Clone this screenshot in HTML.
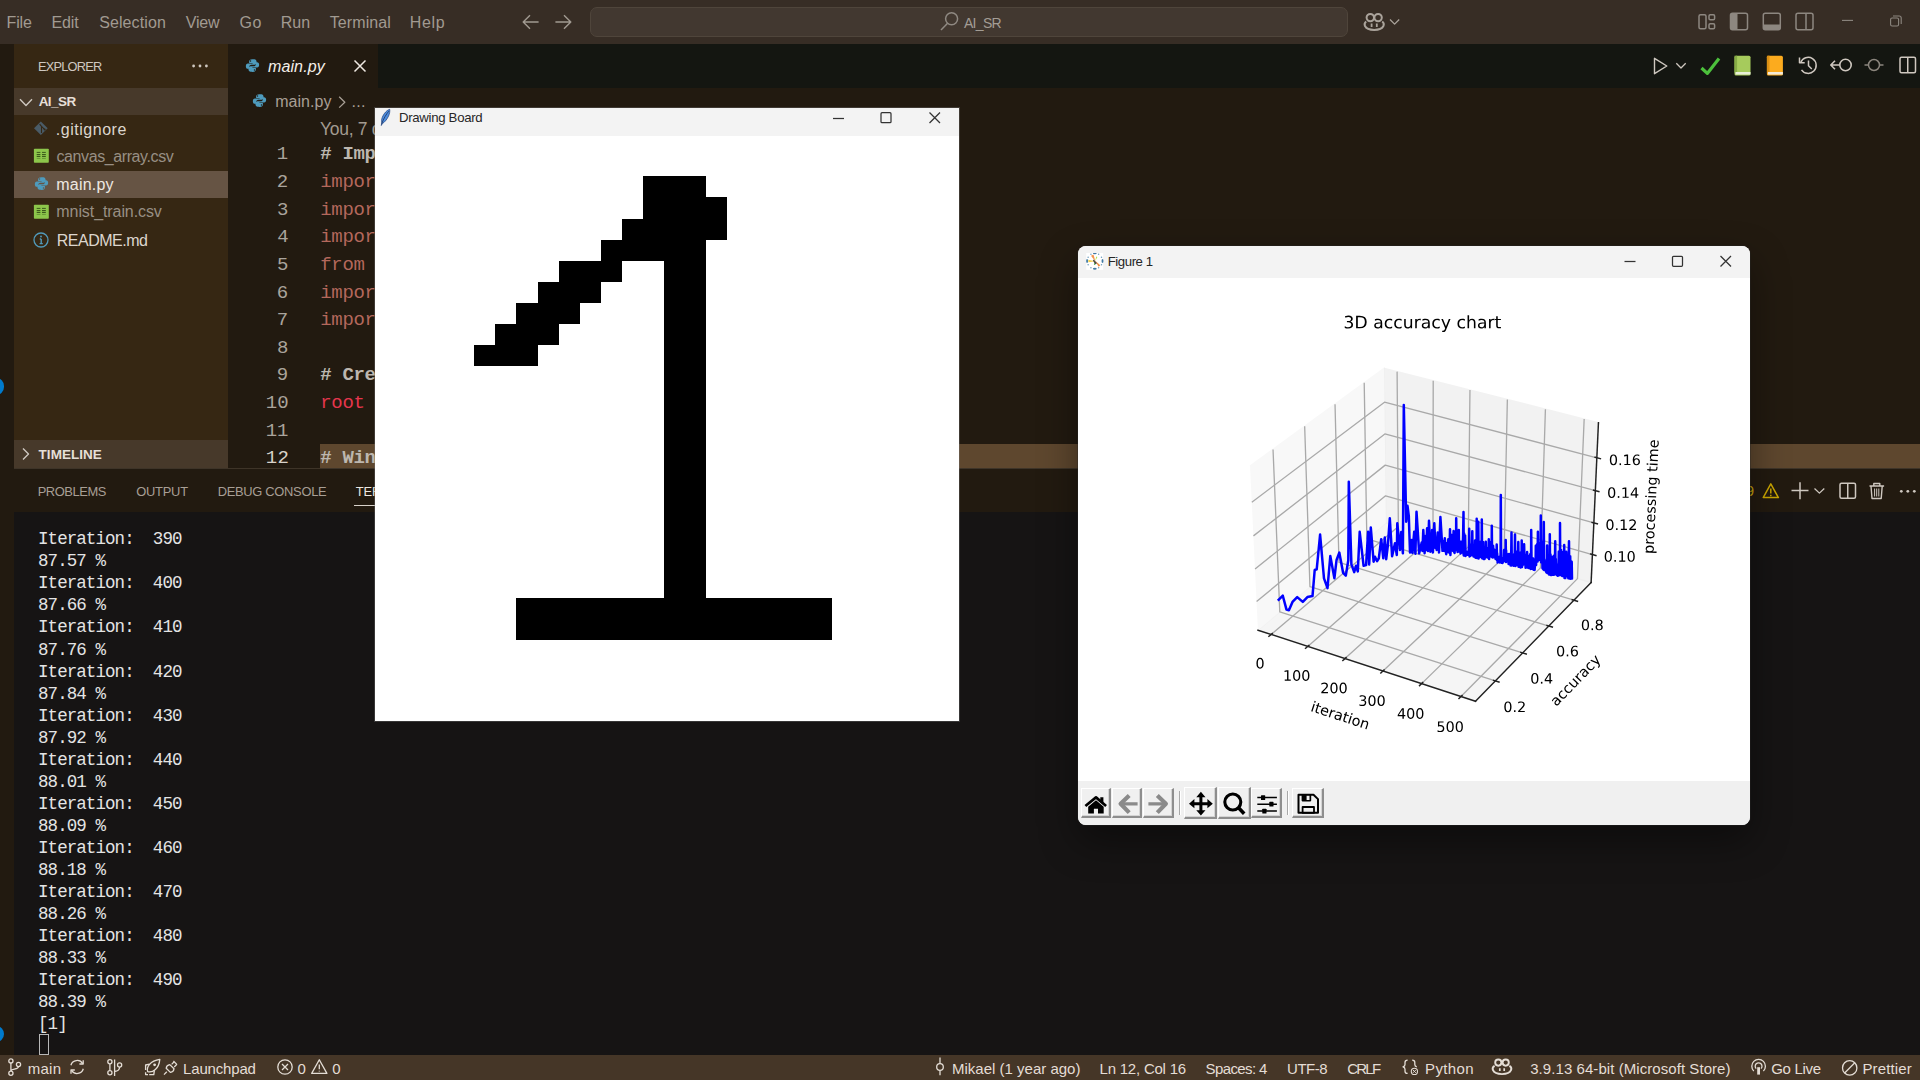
<!DOCTYPE html>
<html><head><meta charset="utf-8"><title>AI_SR - Visual Studio Code</title>
<style>
*{box-sizing:border-box;margin:0;padding:0}
html,body{width:1920px;height:1080px;overflow:hidden;background:#221a10}
body{font-family:"Liberation Sans",sans-serif;position:relative;color:#ddd5cc}
.abs{position:absolute}
.t{position:absolute;white-space:pre;line-height:1}
#titlebar{left:0;top:0;width:1920px;height:44px;background:#372d25}
.menu{font-size:16px;color:#c9c2ba;top:14px}
#search{left:590px;top:7px;width:758px;height:30px;background:#423830;border:1px solid #4f453b;border-radius:7px}
#strip{left:0;top:44px;width:14px;height:1011px;background:#221a10}
#sidebar{left:14px;top:44px;width:214px;height:424px;background:#362713}
#editor{left:228px;top:44px;width:1692px;height:424px;background:#221a10}
#tabbar{left:378px;top:44px;width:1542px;height:44px;background:#141611}
#curline{left:320px;top:443.500px;width:1600px;height:24.500px;background:#5e472e}
#panelhead{left:14px;top:468px;width:1906px;height:44px;background:#221a10;border-top:1px solid #3e3428}
#terminal{left:14px;top:512px;width:1906px;height:543px;background:#161414}
#status{left:0;top:1052px;width:1920px;height:28px;background:#453627}
.sb{font-size:16.25px;left:57px}
.mono{font-family:"Liberation Mono",monospace}
.ln{font-family:"Liberation Mono",monospace;font-size:18.3px;color:#aaa49c;width:60px;left:228px;text-align:right}
.code{font-family:"Liberation Mono",monospace;font-size:18.33px;left:320px}
.term{font-family:"Liberation Mono",monospace;font-size:17px;letter-spacing:-0.65px;color:#e6e6e6;left:39px}
.st{font-size:15px;color:#e4ddd5;top:1061px}
</style></head><body>
<svg width="0" height="0" style="position:absolute"><defs><symbol id="py" viewBox="0 0 16 16"><path fill="#4e9bbd" d="M7.900 1.200c-2.700 0-3.500 1.100-3.500 2.500v1.600h3.700v.6H3.100C1.700 5.900.9 7.100.9 8.700s.8 2.800 2.200 2.800h1.200V9.600c0-1.400 1.200-2.500 2.600-2.500h3.400c1.200 0 2-.9 2-2.100V3.700c0-1.300-1-2.200-2.200-2.400-.7-.1-1.500-.1-2.200-.1zM5.900 2.400a.75.75 0 1 1 0 1.500.75.75 0 0 1 0-1.500z"/><path fill="#4e9bbd" d="M8.100 14.800c2.700 0 3.500-1.100 3.500-2.500v-1.600H7.900v-.6h5c1.400 0 2.200-1.200 2.200-2.800s-.8-2.800-2.200-2.800h-1.200v1.900c0 1.400-1.200 2.500-2.600 2.500H5.700c-1.200 0-2 .9-2 2.100v1.300c0 1.300 1 2.200 2.200 2.400.7.100 1.500.1 2.200.1zm2-1.200a.75.75 0 1 1 0-1.500.75.75 0 0 1 0 1.500z"/></symbol></defs></svg>
<div id="titlebar" class="abs"></div>
<div class="t" style="left:6.59px;top:15.00px;font-size:16px;color:#a19a91;letter-spacing:-0.187px;">File</div>
<div class="t" style="left:51.39px;top:15.00px;font-size:16px;color:#a19a91;letter-spacing:-0.081px;">Edit</div>
<div class="t" style="left:99.18px;top:15.00px;font-size:16px;color:#a19a91;letter-spacing:0.104px;">Selection</div>
<div class="t" style="left:185.64px;top:15.00px;font-size:16px;color:#a19a91;letter-spacing:-0.123px;">View</div>
<div class="t" style="left:239.50px;top:15.00px;font-size:16px;color:#a19a91;letter-spacing:0.528px;">Go</div>
<div class="t" style="left:280.69px;top:15.00px;font-size:16px;color:#a19a91;">Run</div>
<div class="t" style="left:329.75px;top:15.00px;font-size:16px;color:#a19a91;letter-spacing:0.094px;">Terminal</div>
<div class="t" style="left:409.79px;top:15.00px;font-size:16px;color:#a19a91;letter-spacing:0.624px;">Help</div>
<svg class="abs" style="left:520px;top:12px" width="56" height="20" viewBox="0 0 56 20" fill="none" stroke="#a19a91" stroke-width="1.400"><path d="M18.600 10H3.400M10 3.200 3.200 10l6.800 6.800"/><path d="M35.400 10h15.200M44 3.200l6.800 6.800-6.800 6.800"/></svg>
<div id="search" class="abs"></div>
<svg class="abs" style="left:938px;top:9px" width="24" height="24" viewBox="0 0 24 24" fill="none" stroke="#8f8982" stroke-width="1.500"><circle cx="13.600" cy="9.750" r="6"/><path d="M9.600 14.200 3 21"/></svg>
<div class="t" style="left:963.97px;top:16.00px;font-size:14px;color:#a39d95;letter-spacing:-0.697px;">AI_SR</div>
<!-- copilot -->
<svg class="abs" style="left:1362px;top:10px" width="40" height="24" viewBox="0 0 40 24" fill="none" stroke="#aaa39b"><path d="M4.2 11.5C2.6 12.6 2.4 14.6 3 16c1.2 2.6 5 3.9 9.2 3.9s8-1.3 9.2-3.9c.6-1.4.4-3.400-1.200-4.5" stroke-width="2"/><circle cx="8.300" cy="7.600" r="3.700" stroke-width="2"/><circle cx="16.100" cy="7.600" r="3.700" stroke-width="2"/><path d="M9.600 13.500v3.600M14.800 13.500v3.600" stroke-width="1.800"/><path d="M28 9.500l4.600 4.600 4.600-4.600" stroke-width="1.300"/></svg>
<!-- layout icons -->
<svg class="abs" style="left:1696px;top:10px" width="224" height="24" viewBox="0 0 224 24" fill="none" stroke="#8d8780" stroke-width="1.5">
<rect x="3" y="4.800" width="7" height="14" rx="1.500"/><rect x="13" y="4.800" width="5.600" height="5" rx="1.200"/><rect x="13" y="13.700" width="5.600" height="5" rx="1.200"/>
<rect x="34.500" y="3.300" width="17" height="16.400" rx="2"/><path d="M34.500 5.300a2 2 0 0 1 2-2H41.500v16.400H36.500a2 2 0 0 1-2-2z" fill="#8d8780" stroke="none"/>
<rect x="67.300" y="3.300" width="17" height="16.400" rx="2"/><path d="M67.300 14.400h17v3.300a2 2 0 0 1-2 2h-13a2 2 0 0 1-2-2z" fill="#8d8780" stroke="none"/>
<rect x="100" y="3.300" width="17" height="16.400" rx="2"/><path d="M110 3.300v16.400"/>
<path d="M146 10.400h11" stroke-width="1.100"/>
<rect x="194.600" y="8" width="8" height="8" rx="1.500" stroke-width="1.100"/><path d="M197 6h6.200a2 2 0 0 1 2 2v6" stroke-width="1.100"/>
</svg>


<div id="strip" class="abs"></div><div id="sidebar" class="abs"></div><div id="editor" class="abs"></div><div id="tabbar" class="abs"></div>
<div class="t" style="left:37.95px;top:61.00px;font-size:12.8px;color:#cfc8c0;letter-spacing:-0.767px;">EXPLORER</div>
<svg class="abs" style="left:190px;top:60.500px" width="20" height="10" viewBox="0 0 20 10" fill="#cfc8c0"><circle cx="3.600" cy="5" r="1.400"/><circle cx="10" cy="5" r="1.400"/><circle cx="16.400" cy="5" r="1.400"/></svg>
<div class="abs" style="left:14px;top:88px;width:214px;height:27px;background:#47392a"></div>
<svg class="abs" style="left:18px;top:95px" width="16" height="14" viewBox="0 0 16 14" fill="none" stroke="#cfc8c0" stroke-width="1.400"><path d="M2 4.300l6 6.200 6-6.200"/></svg>
<div class="t" style="left:38.66px;top:95.00px;font-size:13.5px;color:#e6dfd7;letter-spacing:-0.559px;font-weight:bold;">AI_SR</div>
<div class="abs" style="left:14px;top:171px;width:214px;height:27px;background:#665444"></div>
<div class="t" style="left:55.74px;top:122.00px;font-size:16px;color:#ddd6ce;letter-spacing:0.537px;">.gitignore</div>
<div class="t" style="left:56.53px;top:149.00px;font-size:16px;color:#988f84;letter-spacing:-0.405px;">canvas_array.csv</div>
<div class="t" style="left:56.34px;top:177.00px;font-size:16px;color:#eee8e1;letter-spacing:0.212px;">main.py</div>
<div class="t" style="left:56.34px;top:204.00px;font-size:16px;color:#988f84;letter-spacing:-0.083px;">mnist_train.csv</div>
<div class="t" style="left:56.69px;top:233.00px;font-size:16px;color:#ddd6ce;letter-spacing:-0.486px;">README.md</div>
<!-- file icons -->
<svg class="abs" style="left:32px;top:119px" width="18" height="18" viewBox="0 0 18 18"><path d="M8.850 2.400l6.850 6.850-6.850 6.850L2 9.250z" fill="#4a5b66"/><path d="M7.600 5.200l1.900 2.200v6.600M9.500 7.400l3 3" stroke="#362713" stroke-width="1.100" fill="none"/><circle cx="12.700" cy="10.500" r="1" fill="#362713"/></svg>
<svg class="abs" style="left:33px;top:148px" width="17" height="16" viewBox="0 0 17 16"><rect x=".9" y=".7" width="14.900" height="14" rx=".8" fill="#8dc64b"/><g fill="#3c5a1c"><rect x="3.700" y="3.900" width="3.700" height="1"/><rect x="9" y="3.900" width="3.800" height="1"/><rect x="3.700" y="6" width="3.700" height="1.100"/><rect x="9" y="6" width="3.800" height="1.100"/><rect x="3.700" y="7.900" width="3.700" height="1.100"/><rect x="9" y="7.900" width="3.800" height="1.100"/></g><g fill="#6a9a36"><rect x="3.700" y="9.900" width="3.700" height="1.100"/><rect x="9" y="9.900" width="3.800" height="1.100"/></g></svg>
<svg class="abs" style="left:33px;top:203.500px" width="17" height="16" viewBox="0 0 17 16"><rect x=".9" y=".7" width="14.900" height="14" rx=".8" fill="#8dc64b"/><g fill="#3c5a1c"><rect x="3.700" y="3.900" width="3.700" height="1"/><rect x="9" y="3.900" width="3.800" height="1"/><rect x="3.700" y="6" width="3.700" height="1.100"/><rect x="9" y="6" width="3.800" height="1.100"/><rect x="3.700" y="7.900" width="3.700" height="1.100"/><rect x="9" y="7.900" width="3.800" height="1.100"/></g><g fill="#6a9a36"><rect x="3.700" y="9.900" width="3.700" height="1.100"/><rect x="9" y="9.900" width="3.800" height="1.100"/></g></svg>
<svg class="abs" style="left:33px;top:231.800px" width="16" height="16" viewBox="0 0 16 16" fill="none" stroke="#519aba" stroke-width="1.300"><circle cx="8" cy="8" r="7"/><path d="M8.200 7v4.600M6.600 11.600h3.200M6.800 7h1.400" stroke-width="1.400"/><circle cx="8" cy="4.500" r=".95" fill="#519aba" stroke="none"/></svg>

<div class="abs" style="left:14px;top:440px;width:214px;height:28px;background:#47392a"></div>
<svg class="abs" style="left:19px;top:446px" width="14" height="16" viewBox="0 0 14 16" fill="none" stroke="#cfc8c0" stroke-width="1.400"><path d="M4 2.500l5.500 5.500L4 13.500"/></svg>
<div class="t" style="left:38.60px;top:448.00px;font-size:13.5px;color:#e6dfd7;letter-spacing:0.024px;font-weight:bold;">TIMELINE</div>
<svg class="abs" style="left:33.800px;top:176.100px" width="15" height="15"><use href="#py"/></svg>
<svg class="abs" style="left:245px;top:57.600px" width="15" height="15"><use href="#py"/></svg>
<div class="t" style="left:268.03px;top:59.00px;font-size:16px;color:#f4efe9;letter-spacing:0.109px;font-style:italic;">main.py</div>
<svg class="abs" style="left:351px;top:56.500px" width="18" height="18" viewBox="0 0 18 18" fill="none" stroke="#efe9e2" stroke-width="1.500"><path d="M3.500 3.500l11 11M14.500 3.500l-11 11"/></svg>
<svg class="abs" style="left:252.400px;top:93.300px" width="15" height="15"><use href="#py"/></svg>
<div class="t" style="left:275.14px;top:94.00px;font-size:16px;color:#a89f95;letter-spacing:0.062px;">main.py</div>
<svg class="abs" style="left:336px;top:93.500px" width="12" height="16" viewBox="0 0 12 16" fill="none" stroke="#a89f95" stroke-width="1.300"><path d="M3.200 2.800l5.600 5.400-5.600 5.400"/></svg>
<div class="t" style="left:351.54px;top:94.00px;font-size:16px;color:#a89f95;letter-spacing:0.234px;">...</div>
<!-- editor toolbar icons -->
<svg class="abs" style="left:1648px;top:52px" width="272" height="28" viewBox="0 0 272 28" fill="none">
<path d="M6.500 6.300v15.400l12.300-7.700z" stroke="#cfc8c0" stroke-width="1.400" stroke-linejoin="round"/>
<path d="M28.300 11.300l4.700 4.700 4.700-4.700" stroke="#cfc8c0" stroke-width="1.300"/>
<path d="M53.500 16l5.800 5.400L71 6.400" stroke="#4cc03c" stroke-width="3.200" stroke-linejoin="miter"/>
<rect x="86.500" y="3.700" width="16" height="19.700" rx="1.500" fill="#a6cb5c"/><rect x="86.500" y="3.700" width="2.600" height="17" fill="#86ab45"/><rect x="87.500" y="20" width="15" height="2.600" fill="#e8efd8"/>
<rect x="118.900" y="3.700" width="16" height="19.700" rx="1.500" fill="#fcab1e"/><rect x="118.900" y="3.700" width="2.600" height="17" fill="#d98f14"/><rect x="119.900" y="20" width="15" height="2.600" fill="#f3ead8"/>
<g stroke="#cfc8c0" stroke-width="1.500"><path d="M153.500 17.800a8 8 0 1 0-.8-7.300"/><path d="M151.500 5.600v5.200h5.200"/><path d="M160.500 8.500v5.300l3.300 3.200"/></g>
<g stroke="#cfc8c0" stroke-width="1.600"><circle cx="197.500" cy="13" r="5.700"/><path d="M191.500 13h-8.500M187 8.800l-4.200 4.200 4.200 4.200"/></g>
<g stroke="#8b857d" stroke-width="1.500"><circle cx="226" cy="13" r="5.500"/><path d="M216.500 13h4M231.500 13h4"/></g>
<g stroke="#cfc8c0" stroke-width="1.500"><rect x="252" y="5.300" width="15.500" height="15.500" rx="1.500"/><path d="M259.750 5.300v15.500"/></g>
</svg>

<div class="t" style="left:320.01px;top:121.00px;font-size:17.5px;color:#a39b90;letter-spacing:-0.284px;">You, 7 d</div>
<div id="curline" class="abs"></div>
<div class="t" style="left:276.78px;top:145.00px;font-size:19px;color:#aaa49c;font-family:'Liberation Mono',monospace;">1</div>
<div class="t" style="left:320.30px;top:145.00px;font-size:19px;color:#bdb7af;font-weight:bold;font-family:'Liberation Mono',monospace;letter-spacing:-0.35px;"># Imp</div>
<div class="t" style="left:276.82px;top:173.00px;font-size:19px;color:#aaa49c;font-family:'Liberation Mono',monospace;">2</div>
<div class="t" style="left:320.30px;top:173.00px;font-size:19px;color:#b4685c;font-family:'Liberation Mono',monospace;letter-spacing:-0.35px;">impor</div>
<div class="t" style="left:276.95px;top:201.00px;font-size:19px;color:#aaa49c;font-family:'Liberation Mono',monospace;">3</div>
<div class="t" style="left:320.30px;top:201.00px;font-size:19px;color:#b4685c;font-family:'Liberation Mono',monospace;letter-spacing:-0.35px;">impor</div>
<div class="t" style="left:277.20px;top:228.00px;font-size:19px;color:#aaa49c;font-family:'Liberation Mono',monospace;">4</div>
<div class="t" style="left:320.30px;top:228.00px;font-size:19px;color:#b4685c;font-family:'Liberation Mono',monospace;letter-spacing:-0.35px;">impor</div>
<div class="t" style="left:276.95px;top:256.00px;font-size:19px;color:#aaa49c;font-family:'Liberation Mono',monospace;">5</div>
<div class="t" style="left:320.30px;top:256.00px;font-size:19px;color:#b4685c;font-family:'Liberation Mono',monospace;letter-spacing:-0.35px;">from </div>
<div class="t" style="left:276.74px;top:284.00px;font-size:19px;color:#aaa49c;font-family:'Liberation Mono',monospace;">6</div>
<div class="t" style="left:320.30px;top:284.00px;font-size:19px;color:#b4685c;font-family:'Liberation Mono',monospace;letter-spacing:-0.35px;">impor</div>
<div class="t" style="left:276.69px;top:311.00px;font-size:19px;color:#aaa49c;font-family:'Liberation Mono',monospace;">7</div>
<div class="t" style="left:320.30px;top:311.00px;font-size:19px;color:#b4685c;font-family:'Liberation Mono',monospace;letter-spacing:-0.35px;">impor</div>
<div class="t" style="left:276.92px;top:339.00px;font-size:19px;color:#aaa49c;font-family:'Liberation Mono',monospace;">8</div>
<div class="t" style="left:276.84px;top:366.00px;font-size:19px;color:#aaa49c;font-family:'Liberation Mono',monospace;">9</div>
<div class="t" style="left:320.30px;top:366.00px;font-size:19px;color:#bdb7af;font-weight:bold;font-family:'Liberation Mono',monospace;letter-spacing:-0.35px;"># Cre</div>
<div class="t" style="left:265.73px;top:394.00px;font-size:19px;color:#aaa49c;letter-spacing:0.227px;font-family:'Liberation Mono',monospace;">10</div>
<div class="t" style="left:320.30px;top:394.00px;font-size:19px;color:#e5364d;font-family:'Liberation Mono',monospace;letter-spacing:-0.35px;">root </div>
<div class="t" style="left:265.73px;top:422.00px;font-size:19px;color:#aaa49c;letter-spacing:-0.020px;font-family:'Liberation Mono',monospace;">11</div>
<div class="t" style="left:265.73px;top:449.00px;font-size:19px;color:#d8d2ca;letter-spacing:0.417px;font-family:'Liberation Mono',monospace;">12</div>
<div class="t" style="left:320.30px;top:449.00px;font-size:19px;color:#bdb7af;font-weight:bold;font-family:'Liberation Mono',monospace;letter-spacing:-0.35px;"># Win</div>
<div id="panelhead" class="abs"></div>
<div id="terminal" class="abs"></div>
<div class="t" style="left:37.64px;top:486.00px;font-size:12.9px;color:#a89f95;letter-spacing:-0.405px;">PROBLEMS</div>
<div class="t" style="left:136.19px;top:486.00px;font-size:12.9px;color:#a89f95;letter-spacing:-0.226px;">OUTPUT</div>
<div class="t" style="left:217.64px;top:486.00px;font-size:12.9px;color:#a89f95;letter-spacing:-0.286px;">DEBUG CONSOLE</div>
<div class="t" style="left:355.82px;top:486.00px;font-size:12.9px;color:#ece6df;letter-spacing:-0.088px;">TERMINAL</div>
<div class="abs" style="left:354px;top:504.500px;width:70px;height:1.500px;background:#d8d2ca"></div>
<div class="t" style="left:1746.34px;top:484.00px;font-size:14px;color:#c9a50c;">9</div>
<svg class="abs" style="left:1758px;top:478px" width="162" height="26" viewBox="0 0 162 26" fill="none">
<path d="M12.800 5.800l7.600 13.800H5.200z" stroke="#cca700" stroke-width="1.500" stroke-linejoin="round"/><path d="M12.800 10.500v5M12.800 16.800v1.500" stroke="#cca700" stroke-width="1.500"/>
<path d="M33.500 12.600h17M42 4.200v17" stroke="#cfc8c0" stroke-width="1.500"/>
<path d="M56.500 10.500l4.900 4.600 4.900-4.600" stroke="#cfc8c0" stroke-width="1.300"/>
<rect x="82" y="5.300" width="15.500" height="15" rx="1.500" stroke="#cfc8c0" stroke-width="1.500"/><path d="M89.750 5.300v15" stroke="#cfc8c0" stroke-width="1.500"/>
<path d="M111.500 8h14.600M115.800 7.600V5.500h6v2.100M113 8.300l1 12.200h9.200l1-12.200" stroke="#cfc8c0" stroke-width="1.400"/><path d="M116.600 10.500v8M118.700 10.500v8M120.800 10.500v8" stroke="#cfc8c0" stroke-width="1"/>
<circle cx="143.300" cy="13.300" r="1.400" fill="#cfc8c0"/><circle cx="149.800" cy="13.300" r="1.400" fill="#cfc8c0"/><circle cx="156.300" cy="13.300" r="1.400" fill="#cfc8c0"/>
</svg>

<div class="t" style="left:38.00px;top:531.00px;font-size:17.5px;color:#e4e4e4;font-family:'Liberation Mono',monospace;letter-spacing:-0.932px;">Iteration:  390</div>
<div class="t" style="left:38.00px;top:553.00px;font-size:17.5px;color:#e4e4e4;font-family:'Liberation Mono',monospace;letter-spacing:-0.932px;">87.57 %</div>
<div class="t" style="left:38.00px;top:575.00px;font-size:17.5px;color:#e4e4e4;font-family:'Liberation Mono',monospace;letter-spacing:-0.932px;">Iteration:  400</div>
<div class="t" style="left:38.00px;top:597.00px;font-size:17.5px;color:#e4e4e4;font-family:'Liberation Mono',monospace;letter-spacing:-0.932px;">87.66 %</div>
<div class="t" style="left:38.00px;top:619.00px;font-size:17.5px;color:#e4e4e4;font-family:'Liberation Mono',monospace;letter-spacing:-0.932px;">Iteration:  410</div>
<div class="t" style="left:38.00px;top:642.00px;font-size:17.5px;color:#e4e4e4;font-family:'Liberation Mono',monospace;letter-spacing:-0.932px;">87.76 %</div>
<div class="t" style="left:38.00px;top:664.00px;font-size:17.5px;color:#e4e4e4;font-family:'Liberation Mono',monospace;letter-spacing:-0.932px;">Iteration:  420</div>
<div class="t" style="left:38.00px;top:686.00px;font-size:17.5px;color:#e4e4e4;font-family:'Liberation Mono',monospace;letter-spacing:-0.932px;">87.84 %</div>
<div class="t" style="left:38.00px;top:708.00px;font-size:17.5px;color:#e4e4e4;font-family:'Liberation Mono',monospace;letter-spacing:-0.932px;">Iteration:  430</div>
<div class="t" style="left:38.00px;top:730.00px;font-size:17.5px;color:#e4e4e4;font-family:'Liberation Mono',monospace;letter-spacing:-0.932px;">87.92 %</div>
<div class="t" style="left:38.00px;top:752.00px;font-size:17.5px;color:#e4e4e4;font-family:'Liberation Mono',monospace;letter-spacing:-0.932px;">Iteration:  440</div>
<div class="t" style="left:38.00px;top:774.00px;font-size:17.5px;color:#e4e4e4;font-family:'Liberation Mono',monospace;letter-spacing:-0.932px;">88.01 %</div>
<div class="t" style="left:38.00px;top:796.00px;font-size:17.5px;color:#e4e4e4;font-family:'Liberation Mono',monospace;letter-spacing:-0.932px;">Iteration:  450</div>
<div class="t" style="left:38.00px;top:818.00px;font-size:17.5px;color:#e4e4e4;font-family:'Liberation Mono',monospace;letter-spacing:-0.932px;">88.09 %</div>
<div class="t" style="left:38.00px;top:840.00px;font-size:17.5px;color:#e4e4e4;font-family:'Liberation Mono',monospace;letter-spacing:-0.932px;">Iteration:  460</div>
<div class="t" style="left:38.00px;top:862.00px;font-size:17.5px;color:#e4e4e4;font-family:'Liberation Mono',monospace;letter-spacing:-0.932px;">88.18 %</div>
<div class="t" style="left:38.00px;top:884.00px;font-size:17.5px;color:#e4e4e4;font-family:'Liberation Mono',monospace;letter-spacing:-0.932px;">Iteration:  470</div>
<div class="t" style="left:38.00px;top:906.00px;font-size:17.5px;color:#e4e4e4;font-family:'Liberation Mono',monospace;letter-spacing:-0.932px;">88.26 %</div>
<div class="t" style="left:38.00px;top:928.00px;font-size:17.5px;color:#e4e4e4;font-family:'Liberation Mono',monospace;letter-spacing:-0.932px;">Iteration:  480</div>
<div class="t" style="left:38.00px;top:950.00px;font-size:17.5px;color:#e4e4e4;font-family:'Liberation Mono',monospace;letter-spacing:-0.932px;">88.33 %</div>
<div class="t" style="left:38.00px;top:972.00px;font-size:17.5px;color:#e4e4e4;font-family:'Liberation Mono',monospace;letter-spacing:-0.932px;">Iteration:  490</div>
<div class="t" style="left:38.00px;top:994.00px;font-size:17.5px;color:#e4e4e4;font-family:'Liberation Mono',monospace;letter-spacing:-0.932px;">88.39 %</div>
<div class="t" style="left:38.00px;top:1016.00px;font-size:17.5px;color:#e4e4e4;font-family:'Liberation Mono',monospace;letter-spacing:-0.932px;">[1]</div>
<div class="abs" style="left:39px;top:1033.500px;width:10px;height:21.500px;border:1px solid #b8b8b8"></div>
<div class="abs" style="left:-12.500px;top:378.400px;width:16.200px;height:16.200px;border-radius:9px;background:#007acc"></div>
<div class="abs" style="left:-12.500px;top:1026.200px;width:16.200px;height:16.200px;border-radius:9px;background:#007acc"></div>
<div id="status" class="abs" style="top:1055px;height:25px"></div>
<div class="t" style="left:27.71px;top:1061.00px;font-size:15px;color:#e4ddd5;letter-spacing:0.253px;">main</div>
<div class="t" style="left:183.07px;top:1061.00px;font-size:15px;color:#e4ddd5;letter-spacing:-0.168px;">Launchpad</div>
<div class="t" style="left:297.42px;top:1061.00px;font-size:15px;color:#e4ddd5;">0</div>
<div class="t" style="left:332.22px;top:1061.00px;font-size:15px;color:#e4ddd5;">0</div>
<div class="t" style="left:952.02px;top:1061.00px;font-size:15px;color:#e4ddd5;">Mikael (1 year ago)</div>
<div class="t" style="left:1099.52px;top:1061.00px;font-size:15px;color:#e4ddd5;letter-spacing:-0.216px;">Ln 12, Col 16</div>
<div class="t" style="left:1205.58px;top:1061.00px;font-size:15px;color:#e4ddd5;letter-spacing:-0.606px;">Spaces: 4</div>
<div class="t" style="left:1287.10px;top:1061.00px;font-size:15px;color:#e4ddd5;letter-spacing:-0.486px;">UTF-8</div>
<div class="t" style="left:1347.23px;top:1061.00px;font-size:15px;color:#e4ddd5;letter-spacing:-1.772px;">CRLF</div>
<div class="t" style="left:1425.07px;top:1061.00px;font-size:15px;color:#e4ddd5;letter-spacing:0.362px;">Python</div>
<div class="t" style="left:1530.23px;top:1061.00px;font-size:15px;color:#e4ddd5;letter-spacing:0.063px;">3.9.13 64-bit (Microsoft Store)</div>
<div class="t" style="left:1771.15px;top:1061.00px;font-size:15px;color:#e4ddd5;letter-spacing:-0.297px;">Go Live</div>
<div class="t" style="left:1862.47px;top:1061.00px;font-size:15px;color:#e4ddd5;letter-spacing:0.118px;">Prettier</div>
<svg class="abs" style="left:0;top:1055px" width="360" height="25" viewBox="0 0 360 25" fill="none" stroke="#e4ddd5" stroke-width="1.300" stroke-linecap="round" stroke-linejoin="round">
<circle cx="10.900" cy="5.900" r="2.100"/><circle cx="10.900" cy="18.300" r="2.100"/><circle cx="18.500" cy="9.500" r="2.100"/><path d="M10.900 8v8.200M18.500 11.600c0 3.600-7.600 1.600-7.600 4.600"/>
<path d="M70.900 10.200a6.500 6.500 0 0 1 11.800-1.600M83.300 13.800a6.500 6.500 0 0 1-11.800 1.600"/><path d="M83.200 5.200v3.800h-3.800M71 18.800v-3.800h3.800"/>
<circle cx="109.900" cy="6.800" r="2.100"/><circle cx="109.900" cy="17.800" r="2.100"/><circle cx="119.600" cy="10" r="2.100"/><path d="M109.900 8.900v6.800M114.600 4.500v16.500M119.600 12.100c0 3.400-2.200 4.200-5 4.400"/>
<path d="M147.600 16.600c-1.200-4.600 2.400-10.800 12.200-12.200-.8 9.400-7 13.600-12.200 12.200z"/><circle cx="154.600" cy="9.800" r="1.400" fill="#e4ddd5" stroke="none"/><path d="M149.600 9.200l-4 .8v5M154.400 15.200l-.6 4.400h-4.600M145.600 17.200v2.400h2.400"/>
<path d="M164 19.600l2.800-2.800"/><path d="M166.200 13.200l4.200 4.200c1.800-.2 3.400-1.800 3.600-3.600l-4.200-4.200c-1.800.2-3.400 1.800-3.600 3.600z"/><path d="M171.600 9.400l2.600-2.600M174.200 12l2.600-2.600M173.400 6l3.600 3.600"/>
<circle cx="285" cy="12" r="7.200"/><path d="M282 9l6 6M288 9l-6 6"/>
<path d="M319.300 4.800l7.600 13.600h-15.200z"/><path d="M319.300 9.600v4.600M319.300 15.800v.6"/>
</svg>

<svg class="abs" style="left:930px;top:1055px" width="990" height="25" viewBox="0 0 990 25" fill="none" stroke="#e4ddd5" stroke-width="1.300" stroke-linecap="round" stroke-linejoin="round">
<circle cx="10" cy="12" r="3.300"/><path d="M10 2.600v6M10 15.400v4.800"/>
<path d="M477.600 5.200c-2.200 0-2.600.8-2.600 2.200v2c0 1.400-.6 2-2 2.400 1.400.4 2 1 2 2.400v2c0 1.400.4 2.200 2.600 2.200M482.200 5.200c2.200 0 2.600.8 2.600 2.200v2c0 1.400.6 2 2 2.400"/><circle cx="484.400" cy="16.400" r="3.100" stroke-width="1.100"/><path d="M483 15l2.800 2.800M485.800 15l-2.800 2.800" stroke-width="1"/>
<path d="M564.600 10.800c-1.800 1-2.200 3-1.600 4.400 1.100 2.600 4.800 3.900 9 3.900s7.900-1.300 9-3.900c.6-1.400.2-3.400-1.600-4.400" stroke-width="1.900"/><circle cx="568.300" cy="7.600" r="3.100" stroke-width="1.900"/><circle cx="575.700" cy="7.600" r="3.100" stroke-width="1.900"/><path d="M569.800 13.200v2.800M574.200 13.200v2.800" stroke-width="1.700"/>
<path d="M823.800 16a6.800 6.800 0 1 1 9.600 0M826.200 13.600a3.400 3.400 0 1 1 4.800 0"/><path d="M828.600 12.200v7.400" stroke-width="2.800"/>
<circle cx="919.700" cy="12.900" r="7.200"/><path d="M914.600 18l10.200-10.200"/>
</svg>

<div class="abs" style="left:375px;top:108px;width:584px;height:613px;background:#fff;box-shadow:0 0 0 1px rgba(120,120,120,.35)"></div>
<div class="abs" style="left:375px;top:108px;width:584px;height:28px;background:#f3f3f3"></div>
<svg class="abs" style="left:379px;top:108px" width="14" height="20" viewBox="0 0 14 20"><path d="M10.700 1.300C8.200 2 4.800 5.200 3.200 9.600 2.500 11.600 2.400 13.300 2.700 14.600L2.300 17.500 3.300 15.700C5.200 14.500 7.800 11.800 9.500 8.200 10.700 5.500 11 3.100 10.700 1.300Z" fill="#4f8fe0" stroke="#1f3f78" stroke-width=".7"/><path d="M9.800 3.200C7.300 6.200 4.600 10.500 2.800 15.500" stroke="#1a2f5a" stroke-width=".8" fill="none"/></svg>
<div class="t" style="left:398.92px;top:111.00px;font-size:13.2px;color:#262626;letter-spacing:-0.290px;">Drawing Board</div>
<svg class="abs" style="left:825px;top:107.500px" width="134" height="28" viewBox="0 0 134 28" fill="none" stroke="#333" stroke-width="1.250"><path d="M8 10.500h11"/><rect x="56" y="4.700" width="10" height="10" rx="1"/><path d="M104.500 4.500l10.500 10.500M115 4.500l-10.500 10.500"/></svg>
<svg class="abs" style="left:375px;top:136px" width="584" height="585" viewBox="0 0 584 585" shape-rendering="crispEdges" fill="#000"><rect x="268" y="40" width="63" height="21"/><rect x="268" y="61" width="84" height="22"/><rect x="247" y="83" width="105" height="21"/><rect x="226" y="104" width="105" height="21"/><rect x="184" y="125" width="63" height="21"/><rect x="163" y="146" width="63" height="21"/><rect x="141" y="167" width="64" height="21"/><rect x="120" y="188" width="64" height="21"/><rect x="99" y="209" width="64" height="21"/><rect x="141" y="462" width="316" height="21"/><rect x="141" y="483" width="316" height="21"/><rect x="289" y="40" width="42" height="464"/></svg>
<div class="abs" style="left:1078px;top:246px;width:672px;height:579px;border-radius:8px;background:#fff;overflow:hidden;box-shadow:0 0 0 1px rgba(40,40,40,.35),0 16px 38px rgba(0,0,0,.42)">
<div class="abs" style="left:0;top:0;width:672px;height:32px;background:#f3f3f3"></div>
<svg class="abs" style="left:8px;top:7px" width="18" height="18" viewBox="0 0 18 18"><rect x="0.3" y="-.2" width="16.800" height="17" fill="#fff"/><ellipse cx="8.80" cy="0.30" rx="1.9" ry="0.95" fill="#3f79a3"/><circle cx="12.65" cy="1.33" r=".75" fill="#6f9dbd"/><circle cx="15.47" cy="4.15" r=".75" fill="#6f9dbd"/><ellipse cx="16.50" cy="8.00" rx="0.95" ry="1.9" fill="#3f79a3"/><circle cx="15.47" cy="11.85" r=".75" fill="#6f9dbd"/><circle cx="12.65" cy="14.67" r=".75" fill="#6f9dbd"/><ellipse cx="8.80" cy="15.70" rx="1.9" ry="0.95" fill="#3f79a3"/><circle cx="4.95" cy="14.67" r=".75" fill="#6f9dbd"/><circle cx="2.13" cy="11.85" r=".75" fill="#6f9dbd"/><ellipse cx="1.10" cy="8.00" rx="0.95" ry="1.9" fill="#3f79a3"/><circle cx="2.13" cy="4.15" r=".75" fill="#6f9dbd"/><circle cx="4.95" cy="1.33" r=".75" fill="#6f9dbd"/><path d="M9.400 8.600L5 2.700 7.500 1.500Z" fill="#f5934a"/><path d="M8.800 7.600L14.300 12.300 12.700 13.700Z" fill="#ef8a3e"/><path d="M9.300 8.200L2.300 6.700 2.400 9.300Z" fill="#f7d24c"/><path d="M9.200 8L11.400 4.100 10.200 3.600Z" fill="#b4e64e"/><path d="M9 8.200L9.300 12 7.800 11.800Z" fill="#4db24d"/><path d="M7.800 6.400l3.200 3.800-1.600 1-2.600-3.600z" fill="#4a4a4a"/></svg>
<div class="t" style="left:29.67px;top:9.00px;font-size:13.2px;color:#262626;letter-spacing:-0.420px;">Figure 1</div>
<svg class="abs" style="left:538px;top:0" width="134" height="32" viewBox="0 0 134 32" fill="none" stroke="#333" stroke-width="1.250"><path d="M8.500 15.500h11"/><rect x="56.500" y="10.300" width="10" height="10" rx="1"/><path d="M104.500 10l10.500 10.500M115 10l-10.500 10.500"/></svg>
<div class="abs" style="left:0;top:32px;width:672px;height:503px;background:#fff">
<svg width="672" height="503" viewBox="0 0 483.84 362.16" style="position:absolute;left:0;top:0">
<defs>
<style type="text/css">*{stroke-linejoin: round; stroke-linecap: butt}</style>
</defs>
<g id="figure_1">
<g id="patch_1">
<path d="M 0 362.16 
L 483.84 362.16 
L 483.84 0 
L 0 0 
z
" style="fill: #ffffff"/>
</g>
<g id="patch_2">
<path d="M 108.53 322.32 
L 387.39 322.32 
L 387.39 43.45 
L 108.53 43.45 
z
" style="fill: #ffffff"/>
</g>
<g id="pane3d_1">
<g id="patch_3">
<path d="M 129.59 253.56 
L 221.68 176.37 
L 220.40 65.04 
L 123.90 135.46 
" style="fill: #f2f2f2; opacity: 0.5; stroke: #f2f2f2; stroke-linejoin: miter"/>
</g>
</g>
<g id="pane3d_2">
<g id="patch_4">
<path d="M 221.68 176.37 
L 369.45 219.32 
L 374.72 104.16 
L 220.40 65.04 
" style="fill: #e6e6e6; opacity: 0.5; stroke: #e6e6e6; stroke-linejoin: miter"/>
</g>
</g>
<g id="pane3d_3">
<g id="patch_5">
<path d="M 129.59 253.56 
L 286.23 304.72 
L 369.45 219.32 
L 221.68 176.37 
" style="fill: #ececec; opacity: 0.5; stroke: #ececec; stroke-linejoin: miter"/>
</g>
</g>
<g id="grid3d_1">
<g id="Line3DCollection_1">
<path d="M 139.06 256.65 
L 230.65 178.98 
L 229.75 67.41 
" style="fill: none; stroke: #a9a9a9; stroke-width: 0.95"/>
<path d="M 165.41 265.26 
L 255.59 186.22 
L 255.75 74.01 
" style="fill: none; stroke: #a9a9a9; stroke-width: 0.95"/>
<path d="M 192.24 274.02 
L 280.94 193.59 
L 282.21 80.71 
" style="fill: none; stroke: #a9a9a9; stroke-width: 0.95"/>
<path d="M 219.57 282.95 
L 306.72 201.09 
L 309.14 87.54 
" style="fill: none; stroke: #a9a9a9; stroke-width: 0.95"/>
<path d="M 247.41 292.04 
L 332.95 208.71 
L 336.54 94.48 
" style="fill: none; stroke: #a9a9a9; stroke-width: 0.95"/>
<path d="M 275.77 301.30 
L 359.62 216.46 
L 364.44 101.55 
" style="fill: none; stroke: #a9a9a9; stroke-width: 0.95"/>
</g>
</g>
<g id="grid3d_2">
<g id="Line3DCollection_2">
<path d="M 140.42 123.41 
L 145.30 240.39 
L 300.48 290.09 
" style="fill: none; stroke: #a9a9a9; stroke-width: 0.95"/>
<path d="M 163.20 106.79 
L 167.00 222.19 
L 320.13 269.93 
" style="fill: none; stroke: #a9a9a9; stroke-width: 0.95"/>
<path d="M 185.06 90.83 
L 187.88 204.70 
L 338.99 250.58 
" style="fill: none; stroke: #a9a9a9; stroke-width: 0.95"/>
<path d="M 206.07 75.50 
L 207.96 187.86 
L 357.10 231.99 
" style="fill: none; stroke: #a9a9a9; stroke-width: 0.95"/>
</g>
</g>
<g id="grid3d_3">
<g id="Line3DCollection_3">
<path d="M 370.37 199.12 
L 221.45 156.81 
L 128.59 232.87 
" style="fill: none; stroke: #a9a9a9; stroke-width: 0.95"/>
<path d="M 371.42 176.30 
L 221.20 134.73 
L 127.47 209.49 
" style="fill: none; stroke: #a9a9a9; stroke-width: 0.95"/>
<path d="M 372.48 153.08 
L 220.94 112.28 
L 126.32 185.68 
" style="fill: none; stroke: #a9a9a9; stroke-width: 0.95"/>
<path d="M 373.56 129.44 
L 220.68 89.44 
L 125.15 161.42 
" style="fill: none; stroke: #a9a9a9; stroke-width: 0.95"/>
</g>
</g>
<g id="axis3d_1">
<g id="line2d_1">
<path d="M 129.59 253.56 
L 286.23 304.72 
" style="fill: none; stroke: #222222; stroke-width: 1.05; stroke-linecap: square"/>
</g>
<g id="xtick_1">
<g id="line2d_2">
<path d="M 139.86 255.98 
L 137.46 258.01 
" style="fill: none; stroke: #222222; stroke-width: 1.05; stroke-linecap: square"/>
</g>
<g id="text_1">
<g transform="translate(127.78 281.18) scale(0.1035 -0.1035)">
<defs>
<path id="DejaVuSans-30" d="M 2034 4250 
Q 1547 4250 1301 3770 
Q 1056 3291 1056 2328 
Q 1056 1369 1301 889 
Q 1547 409 2034 409 
Q 2525 409 2770 889 
Q 3016 1369 3016 2328 
Q 3016 3291 2770 3770 
Q 2525 4250 2034 4250 
z
M 2034 4750 
Q 2819 4750 3233 4129 
Q 3647 3509 3647 2328 
Q 3647 1150 3233 529 
Q 2819 -91 2034 -91 
Q 1250 -91 836 529 
Q 422 1150 422 2328 
Q 422 3509 836 4129 
Q 1250 4750 2034 4750 
z
" transform="scale(0.015625)"/>
</defs>
<use href="#DejaVuSans-30"/>
</g>
</g>
</g>
<g id="xtick_2">
<g id="line2d_3">
<path d="M 166.20 264.57 
L 163.84 266.64 
" style="fill: none; stroke: #222222; stroke-width: 1.05; stroke-linecap: square"/>
</g>
<g id="text_2">
<g transform="translate(147.57 289.98) scale(0.1035 -0.1035)">
<defs>
<path id="DejaVuSans-31" d="M 794 531 
L 1825 531 
L 1825 4091 
L 703 3866 
L 703 4441 
L 1819 4666 
L 2450 4666 
L 2450 531 
L 3481 531 
L 3481 0 
L 794 0 
L 794 531 
z
" transform="scale(0.015625)"/>
</defs>
<use href="#DejaVuSans-31"/>
<use href="#DejaVuSans-30" transform="translate(63.62 0)"/>
<use href="#DejaVuSans-30" transform="translate(127.24 0)"/>
</g>
</g>
</g>
<g id="xtick_3">
<g id="line2d_4">
<path d="M 193.02 273.32 
L 190.69 275.43 
" style="fill: none; stroke: #222222; stroke-width: 1.05; stroke-linecap: square"/>
</g>
<g id="text_3">
<g transform="translate(174.43 298.93) scale(0.1035 -0.1035)">
<defs>
<path id="DejaVuSans-32" d="M 1228 531 
L 3431 531 
L 3431 0 
L 469 0 
L 469 531 
Q 828 903 1448 1529 
Q 2069 2156 2228 2338 
Q 2531 2678 2651 2914 
Q 2772 3150 2772 3378 
Q 2772 3750 2511 3984 
Q 2250 4219 1831 4219 
Q 1534 4219 1204 4116 
Q 875 4013 500 3803 
L 500 4441 
Q 881 4594 1212 4672 
Q 1544 4750 1819 4750 
Q 2544 4750 2975 4387 
Q 3406 4025 3406 3419 
Q 3406 3131 3298 2873 
Q 3191 2616 2906 2266 
Q 2828 2175 2409 1742 
Q 1991 1309 1228 531 
z
" transform="scale(0.015625)"/>
</defs>
<use href="#DejaVuSans-32"/>
<use href="#DejaVuSans-30" transform="translate(63.62 0)"/>
<use href="#DejaVuSans-30" transform="translate(127.24 0)"/>
</g>
</g>
</g>
<g id="xtick_4">
<g id="line2d_5">
<path d="M 220.33 282.23 
L 218.05 284.38 
" style="fill: none; stroke: #222222; stroke-width: 1.05; stroke-linecap: square"/>
</g>
<g id="text_4">
<g transform="translate(201.80 308.05) scale(0.1035 -0.1035)">
<defs>
<path id="DejaVuSans-33" d="M 2597 2516 
Q 3050 2419 3304 2112 
Q 3559 1806 3559 1356 
Q 3559 666 3084 287 
Q 2609 -91 1734 -91 
Q 1441 -91 1130 -33 
Q 819 25 488 141 
L 488 750 
Q 750 597 1062 519 
Q 1375 441 1716 441 
Q 2309 441 2620 675 
Q 2931 909 2931 1356 
Q 2931 1769 2642 2001 
Q 2353 2234 1838 2234 
L 1294 2234 
L 1294 2753 
L 1863 2753 
Q 2328 2753 2575 2939 
Q 2822 3125 2822 3475 
Q 2822 3834 2567 4026 
Q 2313 4219 1838 4219 
Q 1578 4219 1281 4162 
Q 984 4106 628 3988 
L 628 4550 
Q 988 4650 1302 4700 
Q 1616 4750 1894 4750 
Q 2613 4750 3031 4423 
Q 3450 4097 3450 3541 
Q 3450 3153 3228 2886 
Q 3006 2619 2597 2516 
z
" transform="scale(0.015625)"/>
</defs>
<use href="#DejaVuSans-33"/>
<use href="#DejaVuSans-30" transform="translate(63.62 0)"/>
<use href="#DejaVuSans-30" transform="translate(127.24 0)"/>
</g>
</g>
</g>
<g id="xtick_5">
<g id="line2d_6">
<path d="M 248.16 291.31 
L 245.91 293.50 
" style="fill: none; stroke: #222222; stroke-width: 1.05; stroke-linecap: square"/>
</g>
<g id="text_5">
<g transform="translate(229.67 317.33) scale(0.1035 -0.1035)">
<defs>
<path id="DejaVuSans-34" d="M 2419 4116 
L 825 1625 
L 2419 1625 
L 2419 4116 
z
M 2253 4666 
L 3047 4666 
L 3047 1625 
L 3713 1625 
L 3713 1100 
L 3047 1100 
L 3047 0 
L 2419 0 
L 2419 1100 
L 313 1100 
L 313 1709 
L 2253 4666 
z
" transform="scale(0.015625)"/>
</defs>
<use href="#DejaVuSans-34"/>
<use href="#DejaVuSans-30" transform="translate(63.62 0)"/>
<use href="#DejaVuSans-30" transform="translate(127.24 0)"/>
</g>
</g>
</g>
<g id="xtick_6">
<g id="line2d_7">
<path d="M 276.51 300.56 
L 274.31 302.79 
" style="fill: none; stroke: #222222; stroke-width: 1.05; stroke-linecap: square"/>
</g>
<g id="text_6">
<g transform="translate(258.07 326.80) scale(0.1035 -0.1035)">
<defs>
<path id="DejaVuSans-35" d="M 691 4666 
L 3169 4666 
L 3169 4134 
L 1269 4134 
L 1269 2991 
Q 1406 3038 1543 3061 
Q 1681 3084 1819 3084 
Q 2600 3084 3056 2656 
Q 3513 2228 3513 1497 
Q 3513 744 3044 326 
Q 2575 -91 1722 -91 
Q 1428 -91 1123 -41 
Q 819 9 494 109 
L 494 744 
Q 775 591 1075 516 
Q 1375 441 1709 441 
Q 2250 441 2565 725 
Q 2881 1009 2881 1497 
Q 2881 1984 2565 2268 
Q 2250 2553 1709 2553 
Q 1456 2553 1204 2497 
Q 953 2441 691 2322 
L 691 4666 
z
" transform="scale(0.015625)"/>
</defs>
<use href="#DejaVuSans-35"/>
<use href="#DejaVuSans-30" transform="translate(63.62 0)"/>
<use href="#DejaVuSans-30" transform="translate(127.24 0)"/>
</g>
</g>
</g>
<g id="text_7">
<g transform="translate(166.97 311.64) rotate(-341.91) scale(0.1035 -0.1035)">
<defs>
<path id="DejaVuSans-69" d="M 603 3500 
L 1178 3500 
L 1178 0 
L 603 0 
L 603 3500 
z
M 603 4863 
L 1178 4863 
L 1178 4134 
L 603 4134 
L 603 4863 
z
" transform="scale(0.015625)"/>
<path id="DejaVuSans-74" d="M 1172 4494 
L 1172 3500 
L 2356 3500 
L 2356 3053 
L 1172 3053 
L 1172 1153 
Q 1172 725 1289 603 
Q 1406 481 1766 481 
L 2356 481 
L 2356 0 
L 1766 0 
Q 1100 0 847 248 
Q 594 497 594 1153 
L 594 3053 
L 172 3053 
L 172 3500 
L 594 3500 
L 594 4494 
L 1172 4494 
z
" transform="scale(0.015625)"/>
<path id="DejaVuSans-65" d="M 3597 1894 
L 3597 1613 
L 953 1613 
Q 991 1019 1311 708 
Q 1631 397 2203 397 
Q 2534 397 2845 478 
Q 3156 559 3463 722 
L 3463 178 
Q 3153 47 2828 -22 
Q 2503 -91 2169 -91 
Q 1331 -91 842 396 
Q 353 884 353 1716 
Q 353 2575 817 3079 
Q 1281 3584 2069 3584 
Q 2775 3584 3186 3129 
Q 3597 2675 3597 1894 
z
M 3022 2063 
Q 3016 2534 2758 2815 
Q 2500 3097 2075 3097 
Q 1594 3097 1305 2825 
Q 1016 2553 972 2059 
L 3022 2063 
z
" transform="scale(0.015625)"/>
<path id="DejaVuSans-72" d="M 2631 2963 
Q 2534 3019 2420 3045 
Q 2306 3072 2169 3072 
Q 1681 3072 1420 2755 
Q 1159 2438 1159 1844 
L 1159 0 
L 581 0 
L 581 3500 
L 1159 3500 
L 1159 2956 
Q 1341 3275 1631 3429 
Q 1922 3584 2338 3584 
Q 2397 3584 2469 3576 
Q 2541 3569 2628 3553 
L 2631 2963 
z
" transform="scale(0.015625)"/>
<path id="DejaVuSans-61" d="M 2194 1759 
Q 1497 1759 1228 1600 
Q 959 1441 959 1056 
Q 959 750 1161 570 
Q 1363 391 1709 391 
Q 2188 391 2477 730 
Q 2766 1069 2766 1631 
L 2766 1759 
L 2194 1759 
z
M 3341 1997 
L 3341 0 
L 2766 0 
L 2766 531 
Q 2569 213 2275 61 
Q 1981 -91 1556 -91 
Q 1019 -91 701 211 
Q 384 513 384 1019 
Q 384 1609 779 1909 
Q 1175 2209 1959 2209 
L 2766 2209 
L 2766 2266 
Q 2766 2663 2505 2880 
Q 2244 3097 1772 3097 
Q 1472 3097 1187 3025 
Q 903 2953 641 2809 
L 641 3341 
Q 956 3463 1253 3523 
Q 1550 3584 1831 3584 
Q 2591 3584 2966 3190 
Q 3341 2797 3341 1997 
z
" transform="scale(0.015625)"/>
<path id="DejaVuSans-6f" d="M 1959 3097 
Q 1497 3097 1228 2736 
Q 959 2375 959 1747 
Q 959 1119 1226 758 
Q 1494 397 1959 397 
Q 2419 397 2687 759 
Q 2956 1122 2956 1747 
Q 2956 2369 2687 2733 
Q 2419 3097 1959 3097 
z
M 1959 3584 
Q 2709 3584 3137 3096 
Q 3566 2609 3566 1747 
Q 3566 888 3137 398 
Q 2709 -91 1959 -91 
Q 1206 -91 779 398 
Q 353 888 353 1747 
Q 353 2609 779 3096 
Q 1206 3584 1959 3584 
z
" transform="scale(0.015625)"/>
<path id="DejaVuSans-6e" d="M 3513 2113 
L 3513 0 
L 2938 0 
L 2938 2094 
Q 2938 2591 2744 2837 
Q 2550 3084 2163 3084 
Q 1697 3084 1428 2787 
Q 1159 2491 1159 1978 
L 1159 0 
L 581 0 
L 581 3500 
L 1159 3500 
L 1159 2956 
Q 1366 3272 1645 3428 
Q 1925 3584 2291 3584 
Q 2894 3584 3203 3211 
Q 3513 2838 3513 2113 
z
" transform="scale(0.015625)"/>
</defs>
<use href="#DejaVuSans-69"/>
<use href="#DejaVuSans-74" transform="translate(27.78 0)"/>
<use href="#DejaVuSans-65" transform="translate(66.99 0)"/>
<use href="#DejaVuSans-72" transform="translate(128.51 0)"/>
<use href="#DejaVuSans-61" transform="translate(169.62 0)"/>
<use href="#DejaVuSans-74" transform="translate(230.90 0)"/>
<use href="#DejaVuSans-69" transform="translate(270.11 0)"/>
<use href="#DejaVuSans-6f" transform="translate(297.90 0)"/>
<use href="#DejaVuSans-6e" transform="translate(359.08 0)"/>
</g>
</g>
</g>
<g id="axis3d_2">
<g id="line2d_8">
<path d="M 369.45 219.32 
L 286.23 304.72 
" style="fill: none; stroke: #222222; stroke-width: 1.05; stroke-linecap: square"/>
</g>
<g id="xtick_7">
<g id="line2d_9">
<path d="M 299.18 289.67 
L 303.10 290.93 
" style="fill: none; stroke: #222222; stroke-width: 1.05; stroke-linecap: square"/>
</g>
<g id="text_8">
<g transform="translate(306.25 312.53) scale(0.1035 -0.1035)">
<defs>
<path id="DejaVuSans-2e" d="M 684 794 
L 1344 794 
L 1344 0 
L 684 0 
L 684 794 
z
" transform="scale(0.015625)"/>
</defs>
<use href="#DejaVuSans-30"/>
<use href="#DejaVuSans-2e" transform="translate(63.62 0)"/>
<use href="#DejaVuSans-32" transform="translate(95.41 0)"/>
</g>
</g>
</g>
<g id="xtick_8">
<g id="line2d_10">
<path d="M 318.84 269.53 
L 322.71 270.73 
" style="fill: none; stroke: #222222; stroke-width: 1.05; stroke-linecap: square"/>
</g>
<g id="text_9">
<g transform="translate(325.62 292.05) scale(0.1035 -0.1035)">
<use href="#DejaVuSans-30"/>
<use href="#DejaVuSans-2e" transform="translate(63.62 0)"/>
<use href="#DejaVuSans-34" transform="translate(95.41 0)"/>
</g>
</g>
</g>
<g id="xtick_9">
<g id="line2d_11">
<path d="M 337.72 250.19 
L 341.53 251.35 
" style="fill: none; stroke: #222222; stroke-width: 1.05; stroke-linecap: square"/>
</g>
<g id="text_10">
<g transform="translate(344.21 272.40) scale(0.1035 -0.1035)">
<defs>
<path id="DejaVuSans-36" d="M 2113 2584 
Q 1688 2584 1439 2293 
Q 1191 2003 1191 1497 
Q 1191 994 1439 701 
Q 1688 409 2113 409 
Q 2538 409 2786 701 
Q 3034 994 3034 1497 
Q 3034 2003 2786 2293 
Q 2538 2584 2113 2584 
z
M 3366 4563 
L 3366 3988 
Q 3128 4100 2886 4159 
Q 2644 4219 2406 4219 
Q 1781 4219 1451 3797 
Q 1122 3375 1075 2522 
Q 1259 2794 1537 2939 
Q 1816 3084 2150 3084 
Q 2853 3084 3261 2657 
Q 3669 2231 3669 1497 
Q 3669 778 3244 343 
Q 2819 -91 2113 -91 
Q 1303 -91 875 529 
Q 447 1150 447 2328 
Q 447 3434 972 4092 
Q 1497 4750 2381 4750 
Q 2619 4750 2861 4703 
Q 3103 4656 3366 4563 
z
" transform="scale(0.015625)"/>
</defs>
<use href="#DejaVuSans-30"/>
<use href="#DejaVuSans-2e" transform="translate(63.62 0)"/>
<use href="#DejaVuSans-36" transform="translate(95.41 0)"/>
</g>
</g>
</g>
<g id="xtick_10">
<g id="line2d_12">
<path d="M 355.85 231.62 
L 359.61 232.73 
" style="fill: none; stroke: #222222; stroke-width: 1.05; stroke-linecap: square"/>
</g>
<g id="text_11">
<g transform="translate(362.07 253.53) scale(0.1035 -0.1035)">
<defs>
<path id="DejaVuSans-38" d="M 2034 2216 
Q 1584 2216 1326 1975 
Q 1069 1734 1069 1313 
Q 1069 891 1326 650 
Q 1584 409 2034 409 
Q 2484 409 2743 651 
Q 3003 894 3003 1313 
Q 3003 1734 2745 1975 
Q 2488 2216 2034 2216 
z
M 1403 2484 
Q 997 2584 770 2862 
Q 544 3141 544 3541 
Q 544 4100 942 4425 
Q 1341 4750 2034 4750 
Q 2731 4750 3128 4425 
Q 3525 4100 3525 3541 
Q 3525 3141 3298 2862 
Q 3072 2584 2669 2484 
Q 3125 2378 3379 2068 
Q 3634 1759 3634 1313 
Q 3634 634 3220 271 
Q 2806 -91 2034 -91 
Q 1263 -91 848 271 
Q 434 634 434 1313 
Q 434 1759 690 2068 
Q 947 2378 1403 2484 
z
M 1172 3481 
Q 1172 3119 1398 2916 
Q 1625 2713 2034 2713 
Q 2441 2713 2670 2916 
Q 2900 3119 2900 3481 
Q 2900 3844 2670 4047 
Q 2441 4250 2034 4250 
Q 1625 4250 1398 4047 
Q 1172 3844 1172 3481 
z
" transform="scale(0.015625)"/>
</defs>
<use href="#DejaVuSans-30"/>
<use href="#DejaVuSans-2e" transform="translate(63.62 0)"/>
<use href="#DejaVuSans-38" transform="translate(95.41 0)"/>
</g>
</g>
</g>
<g id="text_12">
<g transform="translate(344.37 308.85) rotate(-45.74) scale(0.1035 -0.1035)">
<defs>
<path id="DejaVuSans-63" d="M 3122 3366 
L 3122 2828 
Q 2878 2963 2633 3030 
Q 2388 3097 2138 3097 
Q 1578 3097 1268 2742 
Q 959 2388 959 1747 
Q 959 1106 1268 751 
Q 1578 397 2138 397 
Q 2388 397 2633 464 
Q 2878 531 3122 666 
L 3122 134 
Q 2881 22 2623 -34 
Q 2366 -91 2075 -91 
Q 1284 -91 818 406 
Q 353 903 353 1747 
Q 353 2603 823 3093 
Q 1294 3584 2113 3584 
Q 2378 3584 2631 3529 
Q 2884 3475 3122 3366 
z
" transform="scale(0.015625)"/>
<path id="DejaVuSans-75" d="M 544 1381 
L 544 3500 
L 1119 3500 
L 1119 1403 
Q 1119 906 1312 657 
Q 1506 409 1894 409 
Q 2359 409 2629 706 
Q 2900 1003 2900 1516 
L 2900 3500 
L 3475 3500 
L 3475 0 
L 2900 0 
L 2900 538 
Q 2691 219 2414 64 
Q 2138 -91 1772 -91 
Q 1169 -91 856 284 
Q 544 659 544 1381 
z
M 1991 3584 
L 1991 3584 
z
" transform="scale(0.015625)"/>
<path id="DejaVuSans-79" d="M 2059 -325 
Q 1816 -950 1584 -1140 
Q 1353 -1331 966 -1331 
L 506 -1331 
L 506 -850 
L 844 -850 
Q 1081 -850 1212 -737 
Q 1344 -625 1503 -206 
L 1606 56 
L 191 3500 
L 800 3500 
L 1894 763 
L 2988 3500 
L 3597 3500 
L 2059 -325 
z
" transform="scale(0.015625)"/>
</defs>
<use href="#DejaVuSans-61"/>
<use href="#DejaVuSans-63" transform="translate(61.27 0)"/>
<use href="#DejaVuSans-63" transform="translate(116.25 0)"/>
<use href="#DejaVuSans-75" transform="translate(171.24 0)"/>
<use href="#DejaVuSans-72" transform="translate(234.61 0)"/>
<use href="#DejaVuSans-61" transform="translate(275.73 0)"/>
<use href="#DejaVuSans-63" transform="translate(337.01 0)"/>
<use href="#DejaVuSans-79" transform="translate(391.99 0)"/>
</g>
</g>
</g>
<g id="axis3d_3">
<g id="line2d_13">
<path d="M 369.45 219.32 
L 374.72 104.16 
" style="fill: none; stroke: #222222; stroke-width: 1.05; stroke-linecap: square"/>
</g>
<g id="xtick_11">
<g id="line2d_14">
<path d="M 369.12 198.77 
L 372.88 199.83 
" style="fill: none; stroke: #222222; stroke-width: 1.05; stroke-linecap: square"/>
</g>
<g id="text_13">
<g transform="translate(378.52 204.24) scale(0.1035 -0.1035)">
<use href="#DejaVuSans-30"/>
<use href="#DejaVuSans-2e" transform="translate(63.62 0)"/>
<use href="#DejaVuSans-31" transform="translate(95.41 0)"/>
<use href="#DejaVuSans-30" transform="translate(159.03 0)"/>
</g>
</g>
</g>
<g id="xtick_12">
<g id="line2d_15">
<path d="M 370.16 175.95 
L 373.94 177.00 
" style="fill: none; stroke: #222222; stroke-width: 1.05; stroke-linecap: square"/>
</g>
<g id="text_14">
<g transform="translate(379.73 181.47) scale(0.1035 -0.1035)">
<use href="#DejaVuSans-30"/>
<use href="#DejaVuSans-2e" transform="translate(63.62 0)"/>
<use href="#DejaVuSans-31" transform="translate(95.41 0)"/>
<use href="#DejaVuSans-32" transform="translate(159.03 0)"/>
</g>
</g>
</g>
<g id="xtick_13">
<g id="line2d_16">
<path d="M 371.21 152.74 
L 375.03 153.77 
" style="fill: none; stroke: #222222; stroke-width: 1.05; stroke-linecap: square"/>
</g>
<g id="text_15">
<g transform="translate(380.97 158.30) scale(0.1035 -0.1035)">
<use href="#DejaVuSans-30"/>
<use href="#DejaVuSans-2e" transform="translate(63.62 0)"/>
<use href="#DejaVuSans-31" transform="translate(95.41 0)"/>
<use href="#DejaVuSans-34" transform="translate(159.03 0)"/>
</g>
</g>
</g>
<g id="xtick_14">
<g id="line2d_17">
<path d="M 372.28 129.11 
L 376.14 130.12 
" style="fill: none; stroke: #222222; stroke-width: 1.05; stroke-linecap: square"/>
</g>
<g id="text_16">
<g transform="translate(382.23 134.71) scale(0.1035 -0.1035)">
<use href="#DejaVuSans-30"/>
<use href="#DejaVuSans-2e" transform="translate(63.62 0)"/>
<use href="#DejaVuSans-31" transform="translate(95.41 0)"/>
<use href="#DejaVuSans-36" transform="translate(159.03 0)"/>
</g>
</g>
</g>
<g id="text_17">
<g transform="translate(414.35 198.77) rotate(-87.37) scale(0.1035 -0.1035)">
<defs>
<path id="DejaVuSans-70" d="M 1159 525 
L 1159 -1331 
L 581 -1331 
L 581 3500 
L 1159 3500 
L 1159 2969 
Q 1341 3281 1617 3432 
Q 1894 3584 2278 3584 
Q 2916 3584 3314 3078 
Q 3713 2572 3713 1747 
Q 3713 922 3314 415 
Q 2916 -91 2278 -91 
Q 1894 -91 1617 61 
Q 1341 213 1159 525 
z
M 3116 1747 
Q 3116 2381 2855 2742 
Q 2594 3103 2138 3103 
Q 1681 3103 1420 2742 
Q 1159 2381 1159 1747 
Q 1159 1113 1420 752 
Q 1681 391 2138 391 
Q 2594 391 2855 752 
Q 3116 1113 3116 1747 
z
" transform="scale(0.015625)"/>
<path id="DejaVuSans-73" d="M 2834 3397 
L 2834 2853 
Q 2591 2978 2328 3040 
Q 2066 3103 1784 3103 
Q 1356 3103 1142 2972 
Q 928 2841 928 2578 
Q 928 2378 1081 2264 
Q 1234 2150 1697 2047 
L 1894 2003 
Q 2506 1872 2764 1633 
Q 3022 1394 3022 966 
Q 3022 478 2636 193 
Q 2250 -91 1575 -91 
Q 1294 -91 989 -36 
Q 684 19 347 128 
L 347 722 
Q 666 556 975 473 
Q 1284 391 1588 391 
Q 1994 391 2212 530 
Q 2431 669 2431 922 
Q 2431 1156 2273 1281 
Q 2116 1406 1581 1522 
L 1381 1569 
Q 847 1681 609 1914 
Q 372 2147 372 2553 
Q 372 3047 722 3315 
Q 1072 3584 1716 3584 
Q 2034 3584 2315 3537 
Q 2597 3491 2834 3397 
z
" transform="scale(0.015625)"/>
<path id="DejaVuSans-67" d="M 2906 1791 
Q 2906 2416 2648 2759 
Q 2391 3103 1925 3103 
Q 1463 3103 1205 2759 
Q 947 2416 947 1791 
Q 947 1169 1205 825 
Q 1463 481 1925 481 
Q 2391 481 2648 825 
Q 2906 1169 2906 1791 
z
M 3481 434 
Q 3481 -459 3084 -895 
Q 2688 -1331 1869 -1331 
Q 1566 -1331 1297 -1286 
Q 1028 -1241 775 -1147 
L 775 -588 
Q 1028 -725 1275 -790 
Q 1522 -856 1778 -856 
Q 2344 -856 2625 -561 
Q 2906 -266 2906 331 
L 2906 616 
Q 2728 306 2450 153 
Q 2172 0 1784 0 
Q 1141 0 747 490 
Q 353 981 353 1791 
Q 353 2603 747 3093 
Q 1141 3584 1784 3584 
Q 2172 3584 2450 3431 
Q 2728 3278 2906 2969 
L 2906 3500 
L 3481 3500 
L 3481 434 
z
" transform="scale(0.015625)"/>
<path id="DejaVuSans-20" transform="scale(0.015625)"/>
<path id="DejaVuSans-6d" d="M 3328 2828 
Q 3544 3216 3844 3400 
Q 4144 3584 4550 3584 
Q 5097 3584 5394 3201 
Q 5691 2819 5691 2113 
L 5691 0 
L 5113 0 
L 5113 2094 
Q 5113 2597 4934 2840 
Q 4756 3084 4391 3084 
Q 3944 3084 3684 2787 
Q 3425 2491 3425 1978 
L 3425 0 
L 2847 0 
L 2847 2094 
Q 2847 2600 2669 2842 
Q 2491 3084 2119 3084 
Q 1678 3084 1418 2786 
Q 1159 2488 1159 1978 
L 1159 0 
L 581 0 
L 581 3500 
L 1159 3500 
L 1159 2956 
Q 1356 3278 1631 3431 
Q 1906 3584 2284 3584 
Q 2666 3584 2933 3390 
Q 3200 3197 3328 2828 
z
" transform="scale(0.015625)"/>
</defs>
<use href="#DejaVuSans-70"/>
<use href="#DejaVuSans-72" transform="translate(63.47 0)"/>
<use href="#DejaVuSans-6f" transform="translate(102.33 0)"/>
<use href="#DejaVuSans-63" transform="translate(163.52 0)"/>
<use href="#DejaVuSans-65" transform="translate(218.50 0)"/>
<use href="#DejaVuSans-73" transform="translate(280.02 0)"/>
<use href="#DejaVuSans-73" transform="translate(332.12 0)"/>
<use href="#DejaVuSans-69" transform="translate(384.22 0)"/>
<use href="#DejaVuSans-6e" transform="translate(412.00 0)"/>
<use href="#DejaVuSans-67" transform="translate(475.38 0)"/>
<use href="#DejaVuSans-20" transform="translate(538.86 0)"/>
<use href="#DejaVuSans-74" transform="translate(570.65 0)"/>
<use href="#DejaVuSans-69" transform="translate(609.85 0)"/>
<use href="#DejaVuSans-6d" transform="translate(637.64 0)"/>
<use href="#DejaVuSans-65" transform="translate(735.05 0)"/>
</g>
</g>
</g>
<g id="axes_1">
<g id="text_18">
<g transform="translate(191.12 36.25) scale(0.1242 -0.1242)">
<defs>
<path id="DejaVuSans-44" d="M 1259 4147 
L 1259 519 
L 2022 519 
Q 2988 519 3436 956 
Q 3884 1394 3884 2338 
Q 3884 3275 3436 3711 
Q 2988 4147 2022 4147 
L 1259 4147 
z
M 628 4666 
L 1925 4666 
Q 3281 4666 3915 4102 
Q 4550 3538 4550 2338 
Q 4550 1131 3912 565 
Q 3275 0 1925 0 
L 628 0 
L 628 4666 
z
" transform="scale(0.015625)"/>
<path id="DejaVuSans-68" d="M 3513 2113 
L 3513 0 
L 2938 0 
L 2938 2094 
Q 2938 2591 2744 2837 
Q 2550 3084 2163 3084 
Q 1697 3084 1428 2787 
Q 1159 2491 1159 1978 
L 1159 0 
L 581 0 
L 581 4863 
L 1159 4863 
L 1159 2956 
Q 1366 3272 1645 3428 
Q 1925 3584 2291 3584 
Q 2894 3584 3203 3211 
Q 3513 2838 3513 2113 
z
" transform="scale(0.015625)"/>
</defs>
<use href="#DejaVuSans-33"/>
<use href="#DejaVuSans-44" transform="translate(63.62 0)"/>
<use href="#DejaVuSans-20" transform="translate(140.62 0)"/>
<use href="#DejaVuSans-61" transform="translate(172.41 0)"/>
<use href="#DejaVuSans-63" transform="translate(233.69 0)"/>
<use href="#DejaVuSans-63" transform="translate(288.67 0)"/>
<use href="#DejaVuSans-75" transform="translate(343.65 0)"/>
<use href="#DejaVuSans-72" transform="translate(407.03 0)"/>
<use href="#DejaVuSans-61" transform="translate(448.14 0)"/>
<use href="#DejaVuSans-63" transform="translate(509.42 0)"/>
<use href="#DejaVuSans-79" transform="translate(564.40 0)"/>
<use href="#DejaVuSans-20" transform="translate(623.58 0)"/>
<use href="#DejaVuSans-63" transform="translate(655.37 0)"/>
<use href="#DejaVuSans-68" transform="translate(710.35 0)"/>
<use href="#DejaVuSans-61" transform="translate(773.73 0)"/>
<use href="#DejaVuSans-72" transform="translate(835.00 0)"/>
<use href="#DejaVuSans-74" transform="translate(876.12 0)"/>
</g>
</g>
</g>
</g>
</svg>

<svg class="abs" style="left:0;top:0" width="672" height="503" viewBox="0 0 672 503" fill="none" stroke="#0000ff" stroke-width="2.500" stroke-linejoin="round" stroke-linecap="round"><path d="M199.8 322.6 L204.8 317.7 L208.5 331.6 L210.9 332.3 L214.5 323.9 L219.2 319.1 L224.8 323.9 L229.4 319.1 L234.5 318.1 L236.7 292.0 L238.7 291.3 L242.1 256.6 L246.0 300.3 L249.5 310.1 L252.3 278.1 L256.4 300.3 L258.5 282.3 L261.3 274.6 L265.1 294.8 L267.8 297.6 L270.3 282.3 L270.8 203.8 L273.4 286.4 L276.2 294.1 L278.0 287.8 L279.8 293.4 L281.7 253.8 L285.6 287.8 L288.1 287.1 L290.1 253.8 L291.2 286.4 L292.8 249.6 L295.6 283.7 L297.0 278.7 L299.1 283.2 L300.8 280.3 L303.2 261.2 L305.3 280.3 L306.8 259.5 L308.2 281.2 L309.9 267.0 L311.8 240.3 L314.1 278.2 L317.0 265.3 L318.8 277.0 L319.3 245.3 L322.0 272.0 L323.2 254.1 L324.9 275.3 L325.8 127.0 L328.2 243.7 L329.5 227.8 L330.8 237.8 L332.0 274.5 L333.7 262.0 L334.5 274.9 L336.2 253.7 L337.4 275.8 L338.5 233.7 L341.2 275.3 L343.7 264.5 L344.4 273.0 L345.3 252.0 L346.6 275.3 L347.6 258.0 L348.3 272.0 L349.1 250.3 L350.0 273.0 L351.0 242.8 L352.4 273.7 L353.2 256.0 L353.7 271.0 L354.1 252.0 L354.9 274.5 L356.3 245.3 L357.5 270.0 L358.0 260.0 L358.7 272.0 L359.7 254.5 L361.0 274.5 L362.4 239.1 L364.5 272.8 L365.5 263.0 L366.2 273.0 L366.8 260.3 L368.2 276.2 L369.2 265.0 L369.8 274.0 L370.3 261.2 L371.5 275.0 L372.0 251.2 L372.4 277.0 L373.5 257.0 L374.9 272.8 L375.6 253.0 L376.1 274.0 L376.6 274.9 L377.1 257.4 L377.6 272.0 L378.1 258.5 L378.2 240.3 L378.6 271.8 L378.6 271.9 L379.1 256.0 L379.6 274.0 L380.1 265.1 L380.6 273.4 L380.8 252.0 L381.1 271.8 L381.1 264.0 L381.6 273.4 L382.1 263.4 L382.6 275.4 L383.1 265.3 L383.6 274.6 L384.1 263.4 L384.6 273.3 L385.1 257.3 L385.5 234.1 L385.8 277.4 L385.6 276.5 L386.1 255.4 L386.6 276.9 L387.1 257.4 L387.6 277.9 L388.1 273.5 L388.6 276.8 L389.1 273.9 L389.6 276.7 L390.1 274.6 L390.6 275.0 L391.1 266.4 L391.2 250.8 L391.5 276.3 L391.6 278.5 L392.1 266.6 L392.6 277.8 L393.1 268.2 L393.6 277.1 L394.1 264.6 L394.3 253.2 L394.6 277.3 L394.6 277.2 L395.1 267.2 L395.6 278.5 L396.1 267.1 L396.6 278.8 L397.1 262.4 L397.6 279.8 L398.1 275.8 L398.6 279.0 L398.7 240.8 L399.0 280.1 L399.1 276.1 L399.6 278.4 L400.1 275.9 L400.3 243.7 L400.6 278.6 L400.6 280.5 L401.1 266.1 L401.6 277.4 L402.1 263.9 L402.6 278.8 L403.1 265.4 L403.6 279.5 L403.8 241.6 L404.1 280.2 L404.1 265.1 L404.6 279.9 L405.1 264.0 L405.6 281.0 L406.1 272.2 L406.6 281.0 L407.1 271.9 L407.6 279.0 L407.8 263.7 L408.1 277.5 L408.1 272.3 L408.6 278.6 L409.1 270.5 L409.6 279.5 L410.1 270.0 L410.6 277.2 L410.8 261.2 L411.1 280.9 L411.1 268.8 L411.6 277.6 L412.1 271.8 L412.6 278.3 L413.1 264.0 L413.6 278.7 L413.8 247.8 L414.1 277.9 L414.1 266.8 L414.6 279.4 L415.1 267.7 L415.6 279.3 L416.1 271.5 L416.6 278.4 L417.1 273.1 L417.6 281.0 L418.1 272.0 L418.6 280.9 L418.7 266.6 L419.0 281.9 L419.1 275.1 L419.6 284.4 L420.1 281.6 L420.6 283.7 L421.1 279.1 L421.6 284.5 L422.1 280.0 L422.6 283.5 L422.8 217.0 L423.1 282.4 L423.1 281.0 L423.6 284.8 L424.1 283.9 L424.6 284.9 L425.1 280.1 L425.6 283.5 L426.1 272.1 L426.6 283.1 L427.1 273.6 L427.6 282.0 L427.7 262.0 L428.0 284.1 L428.1 272.2 L428.6 283.4 L429.1 276.2 L429.6 282.9 L430.1 276.5 L430.6 285.9 L431.1 276.0 L431.6 283.7 L432.1 285.4 L432.6 287.4 L433.1 286.0 L433.5 254.5 L433.8 287.1 L433.6 287.4 L434.1 285.7 L434.6 287.1 L435.1 287.0 L435.6 287.6 L436.1 276.2 L436.6 285.9 L437.0 256.6 L437.3 287.9 L437.1 274.3 L437.6 287.6 L438.1 274.3 L438.6 287.0 L439.1 273.6 L439.6 286.7 L440.1 278.1 L440.3 264.1 L440.6 288.7 L440.6 288.8 L441.1 277.3 L441.6 286.5 L442.1 274.8 L442.6 289.4 L443.1 274.9 L443.6 286.3 L443.7 262.4 L444.0 289.0 L444.1 275.7 L444.6 287.1 L445.1 273.9 L445.6 286.3 L446.1 266.2 L446.6 286.0 L447.1 276.8 L447.6 289.7 L448.0 277.0 L448.3 287.7 L448.1 277.0 L448.6 288.1 L449.1 274.0 L449.6 289.4 L450.1 278.0 L450.6 290.0 L451.1 279.6 L451.6 289.1 L452.1 276.2 L452.6 291.0 L453.1 281.8 L453.2 252.0 L453.6 290.7 L453.6 290.2 L454.1 282.8 L454.6 289.1 L455.1 280.5 L455.6 291.7 L456.1 285.5 L456.6 291.9 L457.1 284.4 L457.6 285.9 L457.8 267.8 L458.1 286.9 L458.1 280.4 L458.6 283.4 L459.1 266.2 L459.6 283.5 L459.9 253.7 L460.2 282.2 L460.1 269.8 L460.6 282.1 L461.1 266.4 L461.6 281.7 L462.1 264.9 L462.6 282.0 L462.8 237.4 L463.1 284.2 L463.1 266.2 L463.6 282.9 L464.1 264.1 L464.5 290.3 L464.9 266.6 L465.2 291.2 L465.6 265.3 L465.8 244.1 L466.1 290.9 L466.0 292.0 L466.4 285.7 L466.8 291.9 L467.1 283.3 L467.5 292.5 L467.9 285.2 L468.3 294.3 L468.7 281.4 L469.0 294.7 L469.1 267.4 L469.4 294.3 L469.4 280.9 L469.8 295.2 L470.2 280.8 L470.6 293.4 L470.9 283.2 L471.3 296.6 L471.7 281.4 L471.8 256.2 L472.1 293.2 L472.1 296.6 L472.5 276.6 L472.8 296.9 L473.2 284.6 L473.6 296.9 L474.0 288.7 L474.4 295.2 L474.5 278.7 L474.8 295.8 L474.7 285.9 L475.1 296.8 L475.5 285.2 L475.9 296.8 L476.3 277.4 L476.6 296.5 L477.0 279.7 L477.2 263.2 L477.5 295.0 L477.4 296.0 L477.8 281.1 L478.2 293.9 L478.5 286.9 L478.9 297.0 L479.3 288.3 L479.7 297.8 L480.1 286.5 L480.4 297.5 L480.8 273.6 L481.2 295.4 L481.6 273.2 L482.0 296.0 L482.0 244.9 L482.3 297.0 L482.3 272.0 L482.7 295.7 L483.1 272.0 L483.5 296.7 L483.9 273.9 L484.2 298.1 L484.6 278.4 L485.0 295.3 L485.4 282.6 L485.8 295.7 L486.1 279.6 L486.2 267.0 L486.5 299.9 L486.5 298.7 L486.9 281.7 L487.3 300.1 L487.7 287.0 L488.0 298.6 L488.2 273.7 L488.6 297.1 L488.4 284.5 L488.8 297.3 L489.2 285.1 L489.6 297.9 L489.9 281.1 L490.3 300.3 L490.7 278.9 L491.0 263.2 L491.3 300.5 L491.1 297.4 L491.5 279.9 L491.8 299.9 L492.2 278.3 L492.6 300.8 L493.0 291.2 L493.4 298.3 L493.7 283.7 L494.0 300.5 L493.7 290.2 L493.9 301.6"/></svg>
</div>
<div class="abs" style="left:0;top:535px;width:672px;height:44px;background:#f0f0f0"></div>
<div class="abs" style="left:2.7px;top:541.7px;width:30.8px;height:30.7px;background:#f0f0f0;border-top:1px solid #fff;border-left:1px solid #fff;border-right:2px solid #8e8e8e;border-bottom:2px solid #8e8e8e;box-shadow:inset -1px -1px 0 #d4d4d4"></div>
<div class="abs" style="left:33.9px;top:541.7px;width:30.5px;height:30.7px;background:#f0f0f0;border-top:1px solid #fff;border-left:1px solid #fff;border-right:2px solid #8e8e8e;border-bottom:2px solid #8e8e8e;box-shadow:inset -1px -1px 0 #d4d4d4"></div>
<div class="abs" style="left:64.6px;top:541.7px;width:31.6px;height:30.7px;background:#f0f0f0;border-top:1px solid #fff;border-left:1px solid #fff;border-right:2px solid #8e8e8e;border-bottom:2px solid #8e8e8e;box-shadow:inset -1px -1px 0 #d4d4d4"></div>
<div class="abs" style="left:106.3px;top:540.8px;width:33.2px;height:32.5px;background:#f0f0f0;border-top:1px solid #fff;border-left:1px solid #fff;border-right:2px solid #8e8e8e;border-bottom:2px solid #8e8e8e;box-shadow:inset -1px -1px 0 #d4d4d4"></div>
<div class="abs" style="left:139.9px;top:540.8px;width:32.8px;height:32.5px;background:#f0f0f0;border-top:1px solid #fff;border-left:1px solid #fff;border-right:2px solid #8e8e8e;border-bottom:2px solid #8e8e8e;box-shadow:inset -1px -1px 0 #d4d4d4"></div>
<div class="abs" style="left:173.1px;top:541.7px;width:31.4px;height:30.7px;background:#f0f0f0;border-top:1px solid #fff;border-left:1px solid #fff;border-right:2px solid #8e8e8e;border-bottom:2px solid #8e8e8e;box-shadow:inset -1px -1px 0 #d4d4d4"></div>
<div class="abs" style="left:214.4px;top:541.7px;width:31.4px;height:30.7px;background:#f0f0f0;border-top:1px solid #fff;border-left:1px solid #fff;border-right:2px solid #8e8e8e;border-bottom:2px solid #8e8e8e;box-shadow:inset -1px -1px 0 #d4d4d4"></div>
<div class="abs" style="left:101px;top:545px;width:1px;height:24px;background:#a8a8a8"></div><div class="abs" style="left:102px;top:545px;width:1px;height:24px;background:#fff"></div>
<div class="abs" style="left:209px;top:545px;width:1px;height:24px;background:#a8a8a8"></div><div class="abs" style="left:210px;top:545px;width:1px;height:24px;background:#fff"></div>
<svg class="abs" style="left:0;top:535px" width="260" height="44" viewBox="0 0 260 44">
<path d="M7.400 25L18 16.400 28.100 25" fill="none" stroke="#000" stroke-width="2.700"/>
<path d="M10.200 25.700L18 19.300l7.700 6.400v6.900H20v-4.900h-4.100v4.900h-5.700zM22.300 16.200h3.100v5.800l-3.100-2.600z" fill="#000"/>
<g fill="none" stroke="#8a8a8a"><path d="M51.200 14.600L42.600 22.800l8.600 8.800" stroke-width="4.200"/><path d="M44 22.800h15.600" stroke-width="3.200"/>
<path d="M79.300 14.600l8.600 8.200-8.600 8.800" stroke-width="4.200"/><path d="M86.500 22.800H70.400" stroke-width="3.200"/></g>
<path d="M122.900 10.800l4.600 5.400h-3.100v5h5v-3.100l5.400 4.600-5.400 4.600v-3.100h-5v5h3.100l-4.600 5.400-4.600-5.400h3.100v-5h-5v3.100l-5.400-4.600 5.400-4.600v3.100h5v-5h-3.100z" fill="#000"/>
<circle cx="154.800" cy="21" r="8" fill="none" stroke="#000" stroke-width="3.100"/><path d="M160.800 27l5.400 5.800" stroke="#000" stroke-width="3.500" stroke-linecap="round"/>
<g stroke="#000" stroke-width="1.500" stroke-linecap="round"><path d="M179.300 16.600h19.600M179.300 23.200h19.600M179.300 30.100h19.600"/></g>
<g fill="#000"><rect x="183" y="14.200" width="4.200" height="4.800" rx=".6"/><rect x="191.300" y="20.800" width="4.200" height="4.800" rx=".6"/><rect x="184.300" y="27.700" width="4.200" height="4.800" rx=".6"/></g>
<path d="M220.500 13.800h15l4.500 4.300v13.700h-19.500z" fill="none" stroke="#000" stroke-width="2" stroke-linejoin="round"/><rect x="223.600" y="13.800" width="9.600" height="6.600" rx=".8" fill="#000"/><rect x="228.600" y="14.800" width="2.900" height="4.200" fill="#f0f0f0"/><rect x="224.600" y="26" width="11.400" height="5.800" fill="none" stroke="#000" stroke-width="1.800"/>
</svg>
</div>
</body></html>
